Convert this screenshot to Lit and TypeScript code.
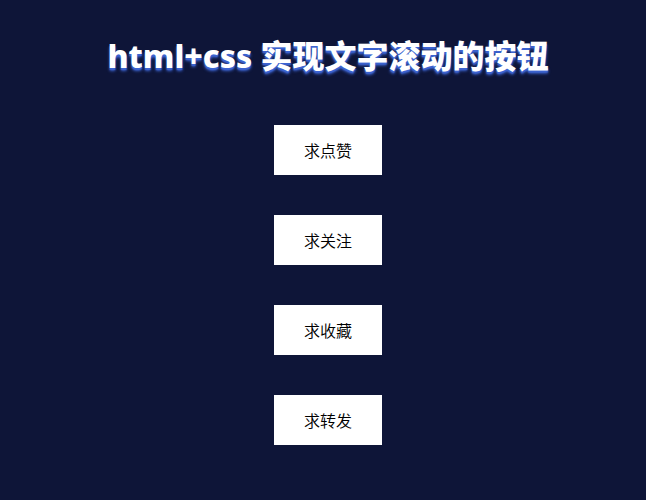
import { LitElement, html, css } from "lit";
import { customElement } from "lit/decorators.js";

@customElement("app-root")
export class AppRoot extends LitElement {
  static styles = css`
    :host {
      display: block;
      box-sizing: border-box;
      min-height: 100vh;
      padding: 32px 0 52px 10px;
      background: #0e1538;
      font-family: "Noto Sans", "Noto Sans CJK SC", sans-serif;
    }
    .title {
      margin: 0 0 45px;
      color: #fff;
      font-size: 32px;
      line-height: 48px;
      font-weight: 800;
      text-align: center;
      text-shadow: 0 2px 1px #3c63d0, 0 3px 3px #3c63d0;
    }
    .actions {
      display: flex;
      flex-direction: column;
      align-items: center;
      gap: 40px;
    }
    .action {
      padding: 13px 30px;
      border: 0;
      border-radius: 0;
      background: #fff;
      color: #000;
      font-family: "Noto Sans CJK SC", sans-serif;
      font-size: 16px;
      line-height: 24px;
      font-weight: 350;
      cursor: pointer;
    }
  `;

  private labels = ["求点赞", "求关注", "求收藏", "求转发"];

  render() {
    return html`
      <h1 class="title">html+css 实现文字滚动的按钮</h1>
      <div class="actions">
        ${this.labels.map((label) => html`<button class="action" type="button">${label}</button>`)}
      </div>
    `;
  }
}
